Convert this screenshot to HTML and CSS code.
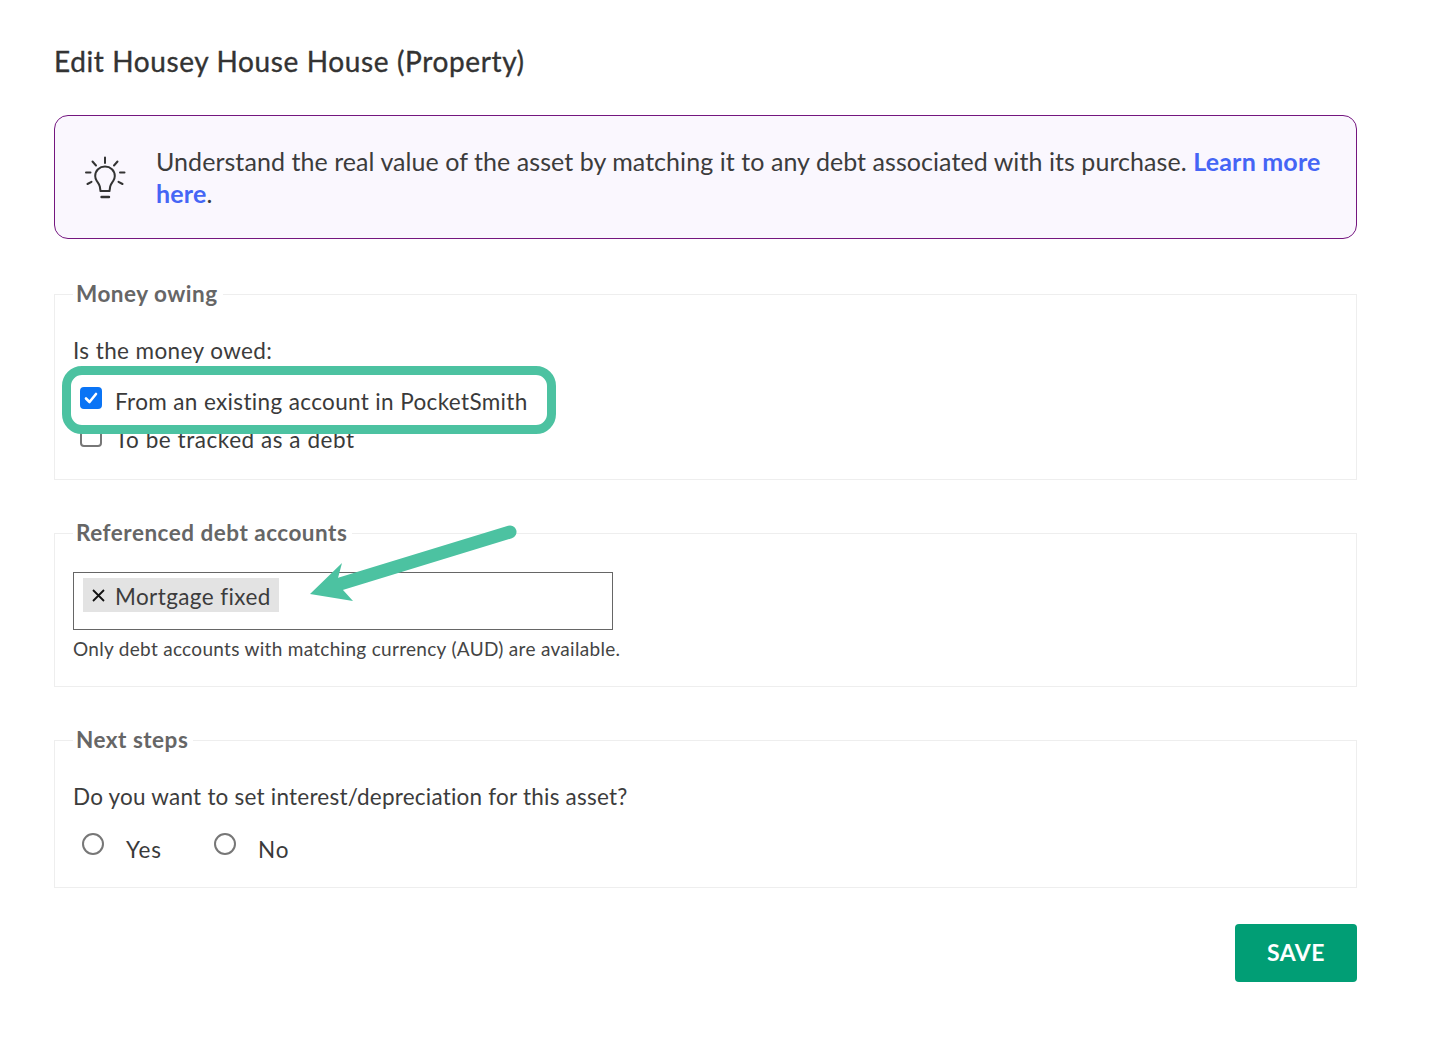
FILE: index.html
```html
<!DOCTYPE html>
<html lang="en">
<head>
<meta charset="utf-8">
<title>Edit Housey House House (Property)</title>
<link rel="stylesheet" href="styles.css">
</head>
<body>
<main class="page">
  <h1 class="title">Edit Housey House House (Property)</h1>
  <div class="callout">
    <svg class="bulb" width="42" height="44" viewBox="0 0 42 44" fill="none" stroke="#333" stroke-width="2" stroke-linecap="round" stroke-linejoin="round">
      <path d="M21 1.500v5.500M8.500 5.500l3.500 4M33.500 5.500l-3.500 4M2 16.500h4.500M36 16.500h4.500M3.500 28l4-2.200M38.500 28l-4-2.200"/>
      <path d="M16.500 35l-.7-4.500c-.4-2.200-1.700-3.500-3-5.500-1-1.500-1.600-3-1.600-5 0-5.500 4.300-9.500 9.800-9.500s9.800 4 9.800 9.500c0 2-.6 3.500-1.600 5-1.300 2-2.600 3.300-3 5.500l-.7 4.500z"/>
      <path d="M17.500 41h7.500" stroke-width="2.400"/>
    </svg>
    <p class="callout-text">Understand the real value of the asset by matching it to any debt associated with its purchase. <a class="link" href="#">Learn more here</a>.</p>
  </div>

  <fieldset class="group group-owing">
    <legend class="legend">Money owing</legend>
    <p class="question question-owing">Is the money owed:</p>
    <label class="check-row check-first"><span class="box box-on"><svg width="14" height="12" viewBox="0 0 14 12" fill="none" stroke="#fff" stroke-width="2.600" stroke-linecap="round" stroke-linejoin="round"><path d="M2 6.500l3.500 3.500L12 2"/></svg></span><span>From an existing account in PocketSmith</span></label>
    <label class="check-row check-second"><span class="box"></span><span>To be tracked as a debt</span></label>
  </fieldset>

  <fieldset class="group group-debt">
    <legend class="legend">Referenced debt accounts</legend>
    <div class="select">
      <span class="tag"><svg class="tag-x" width="13" height="13" viewBox="0 0 13 13" stroke="#111" stroke-width="1.800"><path d="M1 1l11 11M12 1L1 12"/></svg><span class="tag-text">Mortgage fixed</span></span>
    </div>
    <p class="hint">Only debt accounts with matching currency (AUD) are available.</p>
  </fieldset>

  <fieldset class="group group-next">
    <legend class="legend">Next steps</legend>
    <p class="question">Do you want to set interest/depreciation for this asset?</p>
    <div class="radios">
      <label class="radio-row"><span class="radio"></span><span class="radio-text">Yes</span></label>
      <label class="radio-row"><span class="radio"></span><span class="radio-text">No</span></label>
    </div>
  </fieldset>

  <div class="actions"><button class="save" type="button">SAVE</button></div>

  <div class="highlight"></div>
  <svg class="arrow" width="220" height="90" viewBox="0 0 220 90">
    <path d="M200 10L30 62" stroke="#4cc2a1" stroke-width="13" stroke-linecap="round" fill="none"/>
    <path d="M0 72L32 41l-4 15 5 12 10 11z" fill="#4cc2a1"/>
  </svg>
</main>
</body>
</html>
```
FILE: styles.css
```css
* { box-sizing: border-box; }
html, body { margin: 0; background: #fff; }
body {
  font-family: Lato, "Open Sans", "Liberation Sans", sans-serif;
  color: #3a3a3a;
}
.page {
  position: relative;
  width: 1303px;
  height: 1038px;
  margin-left: 54px;
  padding-top: 44px;
}
.title {
  margin: 0 0 37px;
  font-size: 28px;
  line-height: 34px;
  font-weight: 400;
  letter-spacing: .62px;
  -webkit-text-stroke: .35px #333;
  color: #333;
}
.callout {
  display: flex;
  align-items: center;
  height: 124px;
  padding: 0 24px 0 29px;
  background: #faf7fe;
  border: 1px solid #74167f;
  border-radius: 14px;
}
.bulb { flex: none; margin-right: 30px; margin-top: 1px; }
.callout-text {
  margin: 0;
  font-size: 25px;
  line-height: 32px;
  letter-spacing: .06px;
  color: #3c3c3c;
}
.link { color: #4565f5; font-weight: 700; letter-spacing: .2px; text-decoration: none; }
.group {
  margin: 0;
  padding: 0 18px;
  border: 1px solid #eeeeee;
  min-width: 0;
}
.legend {
  margin-left: 0;
  padding: 0 5px 0 3px;
  font-size: 22.500px;
  line-height: 28px;
  font-weight: 700;
  color: #666;
  letter-spacing: .5px;
}
.group-owing { margin-top: 41px; height: 200px; }
.group-debt { margin-top: 39px; height: 168px; }
.group-next { margin-top: 39px; height: 162px; }
.question {
  margin: 28px 0 0;
  font-size: 22.500px;
  line-height: 30px;
  letter-spacing: .22px;
  color: #3c3c3c;
}
.question-owing { letter-spacing: .4px; }
.check-row {
  display: flex;
  align-items: center;
  font-size: 22.500px;
  line-height: 30px;
  letter-spacing: .36px;
  padding-left: 7px;
}
.check-first { margin-top: 21px; }
.check-second { margin-top: 8px; letter-spacing: .55px; }
.box {
  flex: none;
  display: flex;
  align-items: center;
  justify-content: center;
  width: 22px;
  height: 22px;
  margin-right: 13px;
  border: 2px solid #777;
  border-radius: 4px;
  background: #fff;
  position: relative;
  top: -4px;
}
.box-on { background: #0a74f5; border-color: #0a74f5; }
.select {
  margin-top: 25px;
  width: 540px;
  height: 58px;
  padding: 5px 9px;
  border: 1px solid #666;
}
.tag {
  display: inline-flex;
  align-items: center;
  height: 34px;
  padding: 0 8px 0 9px;
  background: #e3e3e3;
  font-size: 22.500px;
  letter-spacing: .4px;
  color: #3c3c3c;
}
.tag-x { margin-right: 10px; }
.tag-text { padding-top: 2px; }
.hint {
  margin: 7px 0 0;
  font-size: 19px;
  line-height: 24px;
  letter-spacing: .3px;
  color: #444;
}
.radios { display: flex; gap: 52px; margin-top: 23px; padding-left: 9px; }
.radio-row { display: flex; align-items: center; font-size: 22.500px; line-height: 30px; letter-spacing: .9px; }
.radio {
  width: 22px;
  height: 22px;
  border: 2px solid #777;
  border-radius: 50%;
  margin-right: 22px;
  position: relative;
  top: -6px;
}
.actions { display: flex; justify-content: flex-end; margin-top: 36px; }
.save {
  width: 122px;
  height: 58px;
  padding: 0 0 2px;
  border: 0;
  border-radius: 4px;
  background: #019e75;
  color: #fff;
  letter-spacing: .5px;
  font: 700 23px Lato, "Open Sans", sans-serif;
}
.highlight {
  position: absolute;
  left: 8px;
  top: 366px;
  width: 494px;
  height: 68px;
  border: 9px solid #4cc2a1;
  border-radius: 20px;
}
.arrow { position: absolute; left: 256px; top: 522px; }
```
